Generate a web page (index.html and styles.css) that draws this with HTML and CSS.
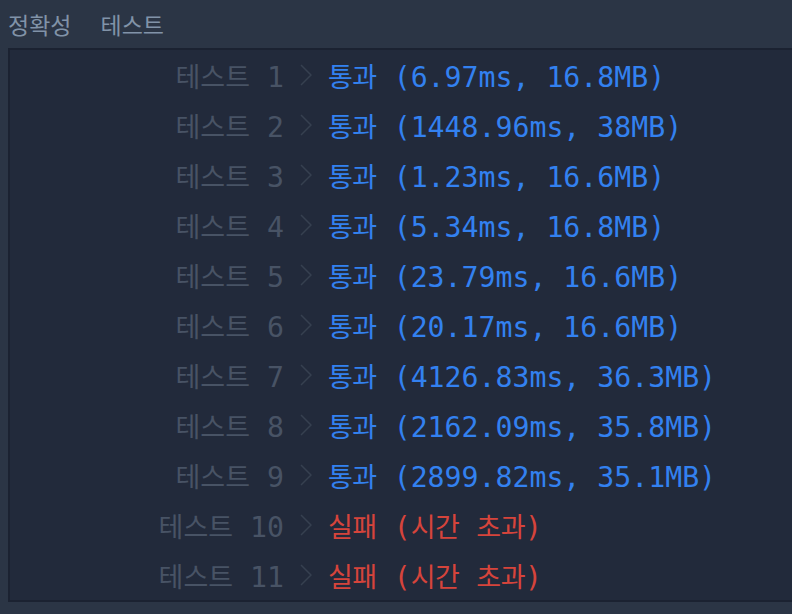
FILE: index.html
```html
<!DOCTYPE html>
<html lang="ko">
<head>
    <meta charset="utf-8">
    <title>채점 결과</title>
    <link rel="stylesheet" href="styles.css">
</head>
<body>
    <div class="tabs">
        <span class="tab">정확성</span>
        <span class="tab">테스트</span>
    </div>
    <div class="console">
        <div class="row"><span class="label"><span class="ko">테스트</span> 1</span><svg class="chev" width="12" height="22" viewBox="0 0 12 22"><polyline points="1,1 11,11 1,21"/></svg><span class="pass"><span class="ko">통과</span> (6.97ms, 16.8MB)</span></div>
        <div class="row"><span class="label"><span class="ko">테스트</span> 2</span><svg class="chev" width="12" height="22" viewBox="0 0 12 22"><polyline points="1,1 11,11 1,21"/></svg><span class="pass"><span class="ko">통과</span> (1448.96ms, 38MB)</span></div>
        <div class="row"><span class="label"><span class="ko">테스트</span> 3</span><svg class="chev" width="12" height="22" viewBox="0 0 12 22"><polyline points="1,1 11,11 1,21"/></svg><span class="pass"><span class="ko">통과</span> (1.23ms, 16.6MB)</span></div>
        <div class="row"><span class="label"><span class="ko">테스트</span> 4</span><svg class="chev" width="12" height="22" viewBox="0 0 12 22"><polyline points="1,1 11,11 1,21"/></svg><span class="pass"><span class="ko">통과</span> (5.34ms, 16.8MB)</span></div>
        <div class="row"><span class="label"><span class="ko">테스트</span> 5</span><svg class="chev" width="12" height="22" viewBox="0 0 12 22"><polyline points="1,1 11,11 1,21"/></svg><span class="pass"><span class="ko">통과</span> (23.79ms, 16.6MB)</span></div>
        <div class="row"><span class="label"><span class="ko">테스트</span> 6</span><svg class="chev" width="12" height="22" viewBox="0 0 12 22"><polyline points="1,1 11,11 1,21"/></svg><span class="pass"><span class="ko">통과</span> (20.17ms, 16.6MB)</span></div>
        <div class="row"><span class="label"><span class="ko">테스트</span> 7</span><svg class="chev" width="12" height="22" viewBox="0 0 12 22"><polyline points="1,1 11,11 1,21"/></svg><span class="pass"><span class="ko">통과</span> (4126.83ms, 36.3MB)</span></div>
        <div class="row"><span class="label"><span class="ko">테스트</span> 8</span><svg class="chev" width="12" height="22" viewBox="0 0 12 22"><polyline points="1,1 11,11 1,21"/></svg><span class="pass"><span class="ko">통과</span> (2162.09ms, 35.8MB)</span></div>
        <div class="row"><span class="label"><span class="ko">테스트</span> 9</span><svg class="chev" width="12" height="22" viewBox="0 0 12 22"><polyline points="1,1 11,11 1,21"/></svg><span class="pass"><span class="ko">통과</span> (2899.82ms, 35.1MB)</span></div>
        <div class="row"><span class="label"><span class="ko">테스트</span> 10</span><svg class="chev" width="12" height="22" viewBox="0 0 12 22"><polyline points="1,1 11,11 1,21"/></svg><span class="fail"><span class="ko">실패</span> (<span class="ko">시간</span> <span class="ko">초과</span>)</span></div>
        <div class="row"><span class="label"><span class="ko">테스트</span> 11</span><svg class="chev" width="12" height="22" viewBox="0 0 12 22"><polyline points="1,1 11,11 1,21"/></svg><span class="fail"><span class="ko">실패</span> (<span class="ko">시간</span> <span class="ko">초과</span>)</span></div>
    </div>
</body>
</html>
```

FILE: styles.css
```css
html, body {
    margin: 0;
    padding: 0;
    background: #2b3545;
    height: 100%;
    overflow: hidden;
}

.tabs {
    height: 48px;
    display: flex;
    align-items: center;
    gap: 29px;
    padding-left: 8px;
    font-family: "Noto Sans CJK KR", sans-serif;
    font-size: 23px;
    color: #8193a8;
}

.console {
    margin-left: 8px;
    background: #222a3b;
    border-top: 2px solid #1b2231;
    border-left: 2px solid #1b2231;
    border-bottom: 2px solid #1b2231;
    font-family: "DejaVu Sans Mono", monospace;
    font-size: 28.2px;
}

.row {
    height: 50px;
    display: flex;
    align-items: center;
    white-space: pre;
}

.ko {
    font-family: "Noto Sans CJK KR", sans-serif;
    font-size: 27px;
    letter-spacing: -0.5px;
}

.label {
    width: 274px;
    text-align: right;
    color: #485365;
}

.label .ko {
    font-size: 27px;
    letter-spacing: 0;
}

.chev {
    margin: 0 16px 0 16px;
    fill: none;
    stroke: #364050;
    stroke-width: 1.5;
}

.pass {
    color: #3381f0;
}

.fail {
    color: #d6443b;
}
```
